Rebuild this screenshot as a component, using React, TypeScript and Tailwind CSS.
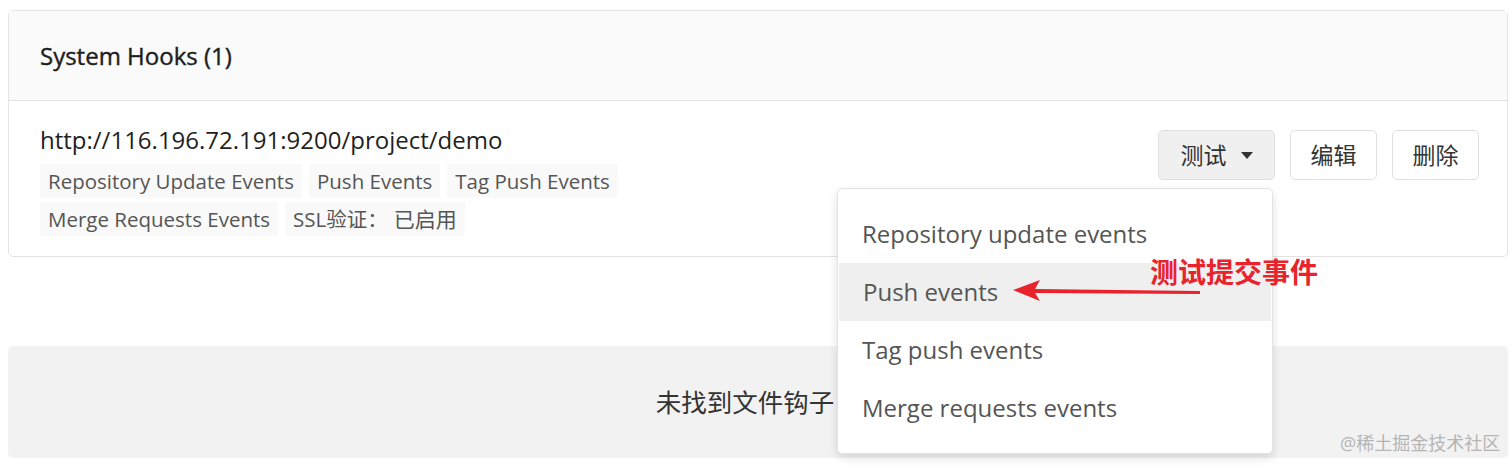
import React from 'react';

const FONT = "font-['Open_Sans','Noto_Sans_CJK_SC',sans-serif]";

const TAGS_ROW_1 = ['Repository Update Events', 'Push Events', 'Tag Push Events'];

const MENU = [
  { label: 'Repository update events', active: false },
  { label: 'Push events', active: true },
  { label: 'Tag push events', active: false },
  { label: 'Merge requests events', active: false },
];

const Tag = ({ children }: { children: React.ReactNode }) => (
  <span className="rounded-[3px] bg-[#f9f9fa] px-[8px] py-[3px] text-[20.5px] leading-[28px] text-[#555]">
    {children}
  </span>
);

export default function App() {
  return (
    <div className={`${FONT} relative h-[470px] w-[1512px] overflow-hidden bg-white pl-[8px] pr-[4px] pt-[10px]`}>
      {/* hooks card */}
      <div className="rounded-[5px] border border-[#e3e3e3]">
        <div className="flex h-[90px] items-center border-b border-[#e3e3e3] bg-[#fafafa] px-[31px]">
          <h2 className="text-[24px] font-normal text-[#1e1e1e] [-webkit-text-stroke:0.4px_#1e1e1e]">System Hooks (1)</h2>
        </div>
        <div className="flex justify-between pl-[31px] pr-[28px] pt-[21px]">
          <div className="flex flex-col">
            <div className="text-[24px] font-medium leading-[36px] text-[#1f1f1f]">
              http://116.196.72.191:9200/project/demo
            </div>
            <div className="mt-[6px] flex gap-[7px]">
              {TAGS_ROW_1.map(t => <Tag key={t}>{t}</Tag>)}
            </div>
            <div className="mt-[4px] mb-[20px] flex gap-[7px]">
              <Tag>Merge Requests Events</Tag>
              <Tag>
                SSL验证：<span className="ml-[6px] text-[21px]">已启用</span>
              </Tag>
            </div>
          </div>
          <div className="flex items-start gap-[15px] pt-[8px]">
            <div className="relative">
              <button className="flex h-[50px] w-[117px] items-center justify-center gap-[14px] rounded-[5px] border border-[#e0e0e0] bg-[#f0f0f0] text-[23px] text-[#333]">
                测试
                <svg width="12" height="7" viewBox="0 0 12 7"><path d="M0 0h12L6 7z" fill="#333" /></svg>
              </button>
              {/* dropdown menu */}
              <div className="absolute right-[2px] top-[58px] z-10 w-[436px] rounded-[5px] border border-[#e3e3e3] bg-white py-[16px] shadow-[0_4px_10px_rgba(0,0,0,0.12)]">
                {MENU.map(m => (
                  <div
                    key={m.label}
                    className={
                      'flex h-[58px] items-center px-[24px] text-[24px] text-[#555] ' +
                      (m.active ? 'mx-[1px] bg-[#efefef]' : '')
                    }
                  >
                    {m.label}
                  </div>
                ))}
              </div>
            </div>
            <button className="h-[50px] w-[87px] rounded-[5px] border border-[#e0e0e0] bg-white text-[23px] text-[#333]">
              编辑
            </button>
            <button className="h-[50px] w-[87px] rounded-[5px] border border-[#e0e0e0] bg-white text-[23px] text-[#333]">
              删除
            </button>
          </div>
        </div>
      </div>

      {/* empty state */}
      <div className="mt-[89px] flex h-[112px] items-center justify-center rounded-[5px] bg-[#f2f2f2] pr-[26px]">
        <span className="text-[25.5px] text-[#333]">未找到文件钩子</span>
      </div>

      {/* annotation */}
      <div className="absolute left-[1150px] top-[254px] z-30 text-[28px] font-bold leading-[36px] text-[#e8232b]">
        测试提交事件
      </div>
      <svg className="absolute left-[1010px] top-[280px] z-30" width="200" height="22" viewBox="0 0 200 22">
        <path d="M3 10 L30 0 L25 9 L190 11 L190 14 L25 13 L30 21 Z" fill="#e8232b" />
      </svg>

      {/* watermark */}
      <div className="absolute left-[1340px] top-[430px] z-30 text-[18px] text-[#b5b5b5]">@稀土掘金技术社区</div>
    </div>
  );
}
